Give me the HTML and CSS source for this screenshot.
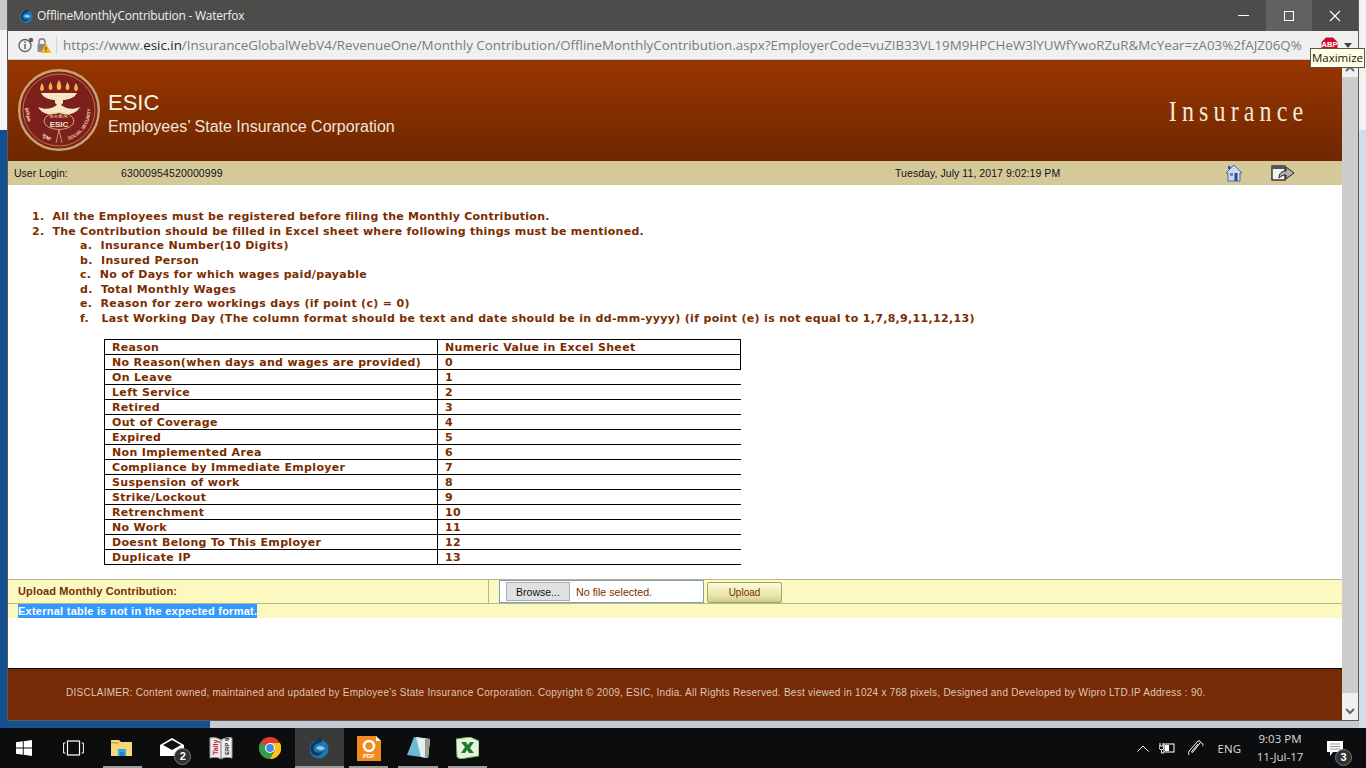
FILE: index.html
```html
<!DOCTYPE html>
<html lang="en">
<head>
    <meta charset="UTF-8">
    <meta name="viewport" content="width=device-width, initial-scale=1.0">
    <title>OfflineMonthlyContribution</title>
    <link rel="stylesheet" href="styles.css">
</head>
<body>
<div class="desktop">
    <div class="window">
        <div class="titlebar">
            <svg class="fox" width="16" height="16" viewBox="0 0 16 16"><circle cx="8" cy="8.500" r="6.500" fill="#1e78b4"/><path d="M8 1 L11 3 L9 5 C6 5 4 7 5 10 C6 12 9 12 11 10 C10 13 7 14 5 13 C2 11 2 6 5 4Z" fill="#0f3f62"/><path d="M6 8 C8 6 10 7 12 8 C11 10 8 10 6 8Z" fill="#9fd4f0"/></svg>
            <span class="wintitle">OfflineMonthlyContribution - Waterfox</span>
            <div class="wincontrols">
                <div class="winbtn"><span class="min-icon"></span></div>
                <div class="winbtn hover"><span class="max-icon"></span></div>
                <div class="winbtn">
                    <svg width="12" height="12" viewBox="0 0 12 12"><path d="M1 1 L11 11 M11 1 L1 11" stroke="#fff" stroke-width="1.100"/></svg>
                </div>
            </div>
        </div>
        <div class="toolbar">
            <svg class="info" width="16" height="16" viewBox="0 0 16 16"><circle cx="7" cy="8.500" r="6" fill="none" stroke="#5f5f5f" stroke-width="1.300"/><rect x="6.300" y="7" width="1.500" height="5" fill="#5f5f5f"/><rect x="6.300" y="4.500" width="1.500" height="1.500" fill="#5f5f5f"/><circle cx="13" cy="3" r="2.200" fill="#5f5f5f"/></svg>
            <svg class="lock" width="16" height="17" viewBox="0 0 16 17"><path d="M3 7 V4.500 C3 1 9 1 9 4.500 V7" fill="none" stroke="#8a8a8a" stroke-width="1.600"/><rect x="1.500" y="7" width="9" height="8" rx="1" fill="#8a8a8a"/><path d="M10 6.500 L15.500 16 H4.500Z" fill="#f6b81f"/><rect x="9.500" y="10" width="1" height="3" fill="#333"/><rect x="9.500" y="13.700" width="1" height="1" fill="#333"/></svg>
            <span class="urlsep"></span>
            <span class="url">https://www.<b>esic.in</b>/InsuranceGlobalWebV4/RevenueOne/Monthly Contribution/OfflineMonthlyContribution.aspx?EmployerCode=vuZIB33VL19M9HPCHeW3lYUWfYwoRZuR&amp;McYear=zA03%2fAJZ06Q%</span>
            <div class="addon">
                <svg width="17" height="17" viewBox="0 0 17 17"><path d="M5 0.500 H12 L16.500 5 V12 L12 16.500 H5 L0.500 12 V5Z" fill="#c8102e"/><text x="8.500" y="9.500" class="abp-text" text-anchor="middle">ABP</text></svg>
                <span class="dropcaret"></span>
            </div>
            <div class="tooltip">Maximize</div>
        </div>
        <div class="viewport">
            <div class="page">
                <div class="banner">
                    <svg class="logo" width="82" height="82" viewBox="0 0 82 82">
                        <defs>
                            <path id="arcl" d="M13.500 52 A30 30 0 0 1 16 24"/>
                            <path id="arcr" d="M50.500 71 A31.500 31.500 0 0 0 72 35"/>
                            <path id="arcb" d="M24 67 A31 31 0 0 0 37 72"/>
                        </defs>
                        <circle cx="41" cy="41" r="39.800" fill="#7d1f1c" stroke="#c6a471" stroke-width="2.400"/>
                        <circle cx="41" cy="41" r="36" fill="none" stroke="#d08a3c" stroke-width="0.800"/>
                        <g fill="#f4b54a">
                            <path d="M24 14 C21.500 18 21.500 22 24 22 C26.500 22 26.500 18 24 14Z"/>
                            <path d="M32.500 13 C30 17 30 21 32.500 21 C35 21 35 17 32.500 13Z"/>
                            <path d="M41 11 C38 16 38 21 41 21 C44 21 44 16 41 11Z"/>
                            <path d="M49.500 13 C47 17 47 21 49.500 21 C52 21 52 17 49.500 13Z"/>
                            <path d="M58 14 C55.500 18 55.500 22 58 22 C60.500 22 60.500 18 58 14Z"/>
                        </g>
                        <path d="M23 24 H59 C56 30 48 31 45 31 V34 L43 36 H39 L37 34 V31 C34 31 26 30 23 24Z" fill="#f6e7c0"/>
                        <path d="M20 38 C27 41 34 40 39 36 H43 C48 40 55 41 62 38 C58 45 50 47 41 44 C32 47 24 45 20 38Z" fill="#f6e7c0"/>
                        <ellipse cx="41" cy="52" rx="15" ry="8.500" fill="none" stroke="#e8c98a" stroke-width="0.800"/>
                        <text x="41" y="49" class="logo-hi" text-anchor="middle">क.रा.बी.नि.</text>
                        <text x="41" y="58" class="logo-esic" text-anchor="middle">ESIC</text>
                        <text class="logo-ring"><textPath href="#arcl">कर्मचारी</textPath></text>
                        <text class="logo-ring"><textPath href="#arcb">सुरक्षा</textPath></text>
                        <text class="logo-ring"><textPath href="#arcr">SOCIAL SECURITY</textPath></text>
                        <path d="M41 61 L38 74 M41 61 L44 74" stroke="#e8c98a" stroke-width="0.700"/>
                    </svg>
                    <div class="org">
                        <div class="org-short">ESIC</div>
                        <div class="org-long">Employees’ State Insurance Corporation</div>
                    </div>
                    <div class="module">Insurance</div>
                </div>
                <div class="navbar">
                    <span class="nav-label">User Login:</span>
                    <span class="nav-code">63000954520000999</span>
                    <span class="nav-date">Tuesday, July 11, 2017 9:02:19 PM</span>
                    <svg class="nav-home" width="18" height="18" viewBox="0 0 18 18"><path d="M9 1 L17 9 H15 V17 H3 V9 H1Z" fill="#cfd8e8" stroke="#4a68a8" stroke-width="1"/><rect x="9.500" y="9" width="3" height="8" fill="#1f4aa8"/><rect x="5" y="9" width="3" height="3" fill="#6d87b8"/><rect x="3" y="2" width="2.500" height="3" fill="#2d4fb0"/></svg>
                    <svg class="nav-exit" width="24" height="18" viewBox="0 0 24 18"><rect x="1" y="2" width="13" height="14" fill="#f2f2f2" stroke="#222" stroke-width="1.300"/><rect x="1" y="2" width="13" height="3" fill="#555"/><path d="M8 14 C8 9 11 7 15 7 V3 L23 9 L15 15 V11 C12 11 10 12 8 14Z" fill="#b0b0b0" stroke="#222" stroke-width="1"/></svg>
                </div>
                <div class="notes">
                    <div class="note">1.&nbsp; All the Employees must be registered before filing the Monthly Contribution.</div>
                    <div class="note">2.&nbsp; The Contribution should be filled in Excel sheet where following things must be mentioned.</div>
                    <div class="subnote">a.&nbsp; Insurance Number(10 Digits)</div>
                    <div class="subnote">b.&nbsp; Insured Person</div>
                    <div class="subnote">c.&nbsp; No of Days for which wages paid/payable</div>
                    <div class="subnote">d.&nbsp; Total Monthly Wages</div>
                    <div class="subnote">e.&nbsp; Reason for zero workings days (if point (c) = 0)</div>
                    <div class="subnote">f.&nbsp;&nbsp; Last Working Day (The column format should be text and date should be in dd-mm-yyyy) (if point (e) is not equal to 1,7,8,9,11,12,13)</div>
                </div>
                <table class="reasons">
                    <tr><td class="col1">Reason</td><td>Numeric Value in Excel Sheet</td></tr>
                    <tr><td class="col1">No Reason(when days and wages are provided)</td><td>0</td></tr>
                    <tr><td class="col1">On Leave</td><td>1</td></tr>
                    <tr><td class="col1">Left Service</td><td>2</td></tr>
                    <tr><td class="col1">Retired</td><td>3</td></tr>
                    <tr><td class="col1">Out of Coverage</td><td>4</td></tr>
                    <tr><td class="col1">Expired</td><td>5</td></tr>
                    <tr><td class="col1">Non Implemented Area</td><td>6</td></tr>
                    <tr><td class="col1">Compliance by Immediate Employer</td><td>7</td></tr>
                    <tr><td class="col1">Suspension of work</td><td>8</td></tr>
                    <tr><td class="col1">Strike/Lockout</td><td>9</td></tr>
                    <tr><td class="col1">Retrenchment</td><td>10</td></tr>
                    <tr><td class="col1">No Work</td><td>11</td></tr>
                    <tr><td class="col1">Doesnt Belong To This Employer</td><td>12</td></tr>
                    <tr><td class="col1">Duplicate IP</td><td>13</td></tr>
                </table>
                <div class="upload">
                    <div class="upload-label">Upload Monthly Contribution:</div>
                    <div class="upload-field">
                        <div class="filebox">
                            <button class="browse">Browse...</button>
                            <span class="nofile">No file selected.</span>
                        </div>
                        <button class="upload-btn">Upload</button>
                    </div>
                </div>
                <div class="message"><span class="selected">External table is not in the expected format.</span></div>
                <div class="footer">DISCLAIMER: Content owned, maintained and updated by Employee's State Insurance Corporation. Copyright © 2009, ESIC, India. All Rights Reserved. Best viewed in 1024 x 768 pixels, Designed and Developed by Wipro LTD.IP Address : 90.</div>
            </div>
            <div class="scrollbar">
                <svg width="16" height="17" viewBox="0 0 16 17"><path d="M4 11 L8 7 L12 11" fill="none" stroke="#666" stroke-width="2"/></svg>
                <div class="track"><div class="thumb"></div></div>
                <svg width="16" height="17" viewBox="0 0 16 17"><path d="M4 6 L8 10 L12 6" fill="none" stroke="#666" stroke-width="2"/></svg>
            </div>
        </div>
    </div>
</div>
<div class="taskbar">
    <div class="task wide">
        <svg width="16" height="16" viewBox="0 0 16 16"><path d="M0 2.300 L6.800 1.300 V7.500 H0Z M7.700 1.200 L16 0 V7.500 H7.700Z M0 8.400 H6.800 V14.700 L0 13.700Z M7.700 8.400 H16 V16 L7.700 14.800Z" fill="#fff"/></svg>
    </div>
    <div class="task wide">
        <svg width="21" height="16" viewBox="0 0 21 16"><rect x="4.500" y="1" width="12" height="14" fill="none" stroke="#fff" stroke-width="1.200"/><path d="M2.500 3 H0.600 V13 H2.500 M18.500 3 H20.400 V13 H18.500" fill="none" stroke="#fff"/></svg>
    </div>
    <div class="task running">
        <svg width="22" height="18" viewBox="0 0 22 18"><path d="M0 1 H8 L10 3 H21 V17 H0Z" fill="#f5d77c"/><rect x="0" y="3" width="8" height="1.500" fill="#c9a84a"/><path d="M7 10 H15 V17 H13 V13 H9 V17 H7Z" fill="#38a6de"/><rect x="9" y="13" width="4" height="4" fill="#2b7fb5"/></svg>
    </div>
    <div class="task">
        <svg width="24" height="20" viewBox="0 0 24 20"><path d="M0 7 L12 0 L24 7 V18 H0Z" fill="#fff"/><path d="M3 7 L12 2 L21 7 L12 12Z" fill="#111"/></svg>
        <span class="badge">2</span>
    </div>
    <div class="task">
        <svg width="24" height="24" viewBox="0 0 24 24"><path d="M1 2 C5 1 9 2 12 4 C15 2 19 1 23 2 V22 C19 21 15 21 12 23 C9 21 5 21 1 22Z" fill="#eee" stroke="#999"/><path d="M12 4 V23" stroke="#777"/><text x="0" y="0" class="book-red" transform="translate(8.500 19) rotate(-90)">Tally</text><text x="0" y="0" class="book-black" transform="translate(19.500 19) rotate(-90)">ERP 9</text></svg>
    </div>
    <div class="task">
        <svg width="22" height="22" viewBox="0 0 22 22"><circle cx="11" cy="11" r="11" fill="#e33b2e"/><path d="M11 11 L1.500 5.500 A11 11 0 0 0 11 22 L16.500 11Z" fill="#2f9e44"/><path d="M11 6 H21 A11 11 0 0 1 11 22 L16 13Z" fill="#f9c513"/><circle cx="11" cy="11" r="5" fill="#fff"/><circle cx="11" cy="11" r="3.900" fill="#4285f4"/></svg>
    </div>
    <div class="task active">
        <svg width="20" height="22" viewBox="0 0 20 22"><circle cx="10" cy="12" r="9.500" fill="#1e78b4"/><path d="M10 0 L14 3 L11 6 C7 6 4 9 5 13 C6 16 10 17 14 14 C12 18 8 20 5 18 C0 15 0 8 5 5Z" fill="#0e3a5c"/><path d="M7 11 C10 8 13 9 16 11 C14 14 10 14 7 11Z" fill="#8fcdec"/></svg>
    </div>
    <div class="task running">
        <svg width="24" height="25" viewBox="0 0 24 25"><path d="M0 0 H19 L24 5 V25 H0Z" fill="#f28a1e"/><path d="M19 0 L24 5 H19Z" fill="#fff"/><circle cx="12" cy="10" r="5" fill="none" stroke="#fff" stroke-width="2.500"/><text x="12" y="22" class="pdf-text" text-anchor="middle">PDF</text></svg>
    </div>
    <div class="task running">
        <svg width="23" height="22" viewBox="0 0 23 22"><path d="M7 0 L23 2 L21 21 L0 18Z" fill="#6fb9d4"/><path d="M9 0 L23 2 L21 21 L14 20Z" fill="#dff0f4"/><path d="M18 2 L23 2 L21 21 L18 20Z" fill="#9b9b8c"/></svg>
    </div>
    <div class="task running">
        <svg width="23" height="22" viewBox="0 0 23 22"><path d="M0 2 L14 0 L23 4 V19 L4 22 L1 20Z" fill="#e6f2dc" stroke="#6fa65a"/><path d="M5 5 L10 5 L12 8 L14 5 L18 5 L14 11 L18 16 H13 L11 13 L9 16 H5 L9 10Z" fill="#1f7a2e"/></svg>
    </div>
    <div class="tray">
        <svg width="12" height="7" viewBox="0 0 12 7"><path d="M0.500 6.500 L6 1 L11.500 6.500" fill="none" stroke="#fff"/></svg>
        <svg class="tray-power" width="16" height="12" viewBox="0 0 16 12"><rect x="5" y="2" width="10" height="8" fill="none" stroke="#fff"/><rect x="6" y="3" width="4" height="6" fill="#fff"/><path d="M1 4 V1 M4 4 V1 M0 4 H5 V6 L3 8 H2 L0 6Z M2.500 8 V11 H5" fill="none" stroke="#fff"/></svg>
        <svg class="tray-pen" width="16" height="16" viewBox="0 0 16 16"><path d="M1 15 C0 13 1 11 2 10 L10 1 C12 0 13 2 12 3 L5 12 C4 13 3 12 4 11 L10 4 M13 3 C15 3 16 5 14 6" fill="none" stroke="#fff"/></svg>
        <span class="tray-lang">ENG</span>
        <div class="clock"><div>9:03 PM</div><div>11-Jul-17</div></div>
        <div class="notify">
            <svg width="17" height="17" viewBox="0 0 17 17"><path d="M0 1 H16 V12 H6 L3 16 V12 H0Z" fill="#fff"/><path d="M3 4 H13 M3 6.500 H13 M3 9 H13" stroke="#999"/></svg>
            <span class="badge notify-badge">3</span>
        </div>
    </div>
</div>
</body>
</html>
```

FILE: styles.css
```css
*{
    box-sizing: border-box;
}
html, body{
    margin: 0;
    height: 100%;
    overflow: hidden;
}
body{
    width: 1366px;
    height: 768px;
    font-family: "Liberation Sans", sans-serif;
}
.desktop{
    height: 728px;
    padding-left: 7px;
    background:
        linear-gradient(#c9c9c9 0 30px, #f4f4f4 30px 130px, #14508f 130px) left top / 7px 100% no-repeat,
        linear-gradient(#f2f2f2 0 130px, #d3dce8 130px) right top / 7px 100% no-repeat,
        linear-gradient(90deg, #17508f 210px, #c5c9d0 210px);
}
.window{
    width: 1352px;
    height: 721px;
    border: 1px solid #5a5a5a;
    border-top: none;
    display: flex;
    flex-direction: column;
    position: relative;
}

/* browser chrome */
.titlebar{
    height: 31px;
    background: #4d4c4a;
    display: flex;
    align-items: center;
    color: #fff;
    padding-left: 10px;
}
.fox{
    margin-right: 3px;
}
.wintitle{
    font-family: "Open Sans", sans-serif;
    font-size: 12px;
    color: #f0f0f0;
    letter-spacing: -0.23px;
}
.wincontrols{
    margin-left: auto;
    display: flex;
    height: 100%;
}
.winbtn{
    width: 46px;
    display: flex;
    align-items: center;
    justify-content: center;
}
.hover{
    background: #616160;
}
.min-icon{
    width: 11px;
    height: 1px;
    background: #fff;
}
.max-icon{
    width: 10px;
    height: 10px;
    border: 1px solid #fff;
}
.toolbar{
    height: 29px;
    background: #f0f0f0;
    border-bottom: 1px solid #cfcfcf;
    display: flex;
    align-items: center;
    padding-left: 10px;
    position: relative;
}
.lock{
    margin-left: 2px;
}
.urlsep{
    width: 1px;
    height: 18px;
    background: #d4d4d4;
    margin: 0 6px 0 4px;
}
.url{
    font-family: "Open Sans", sans-serif;
    font-size: 13.37px;
    color: #7b7b7b;
    white-space: nowrap;
    width: 1242px;
    overflow: hidden;
}
.url b{
    font-weight: normal;
    color: #222;
}
.addon{
    display: flex;
    align-items: center;
    margin-left: 16px;
    gap: 6px;
}
.abp-text{
    font-family: "Liberation Sans", sans-serif;
    font-size: 7.5px;
    font-weight: bold;
    fill: #fff;
}
.dropcaret{
    width: 0;
    height: 0;
    border-left: 4px solid transparent;
    border-right: 4px solid transparent;
    border-top: 5px solid #444;
}
.tooltip{
    position: absolute;
    right: -7px;
    top: 17px;
    width: 55px;
    height: 20px;
    background: #ffffe1;
    border: 1px solid #555;
    font-family: "Open Sans", sans-serif;
    font-size: 11.5px;
    line-height: 18px;
    text-align: center;
    color: #111;
    z-index: 2;
}
.viewport{
    flex: 1;
    display: flex;
    min-height: 0;
}
.page{
    width: 1334px;
    background: #fff;
    display: flex;
    flex-direction: column;
}
.scrollbar{
    width: 16px;
    background: #f0f0f0;
    display: flex;
    flex-direction: column;
}
.track{
    flex: 1;
}
.thumb{
    height: 616px;
    background: #cdcdcd;
}

/* esic page */
.banner{
    height: 101px;
    background: linear-gradient(#993600, #6e2700);
    display: flex;
    align-items: center;
    padding-left: 10px;
    color: #fff;
    flex-shrink: 0;
}
.logo{
    margin-bottom: 2px;
}
.logo-hi{
    font-family: "Noto Sans", "DejaVu Sans", sans-serif;
    font-size: 4.5px;
    fill: #f5e6c8;
}
.logo-esic{
    font-family: "Liberation Sans", sans-serif;
    font-size: 8px;
    font-weight: bold;
    fill: #f5e6c8;
}
.logo-ring{
    font-family: "Liberation Sans", sans-serif;
    font-size: 4.5px;
    font-weight: bold;
    fill: #ecd9b4;
}
.org{
    margin-left: 8px;
    padding-top: 6px;
}
.org-short{
    font-size: 22px;
    line-height: 26px;
    color: #f8f2ea;
}
.org-long{
    font-size: 16px;
    line-height: 22px;
    color: #f0e4da;
}
.module{
    margin-left: auto;
    margin-right: 34px;
    margin-top: 1px;
    font-family: "Liberation Serif", serif;
    font-size: 30px;
    letter-spacing: 6.4px;
    color: #f3e8da;
    transform: scaleX(0.8);
    transform-origin: right center;
}
.navbar{
    height: 24px;
    background: #d6c999;
    display: flex;
    align-items: center;
    padding-left: 6px;
    font-size: 10.5px;
    color: #111;
    flex-shrink: 0;
    position: relative;
}
.nav-label{
    width: 107px;
}
.nav-code{
    width: 774px;
    letter-spacing: 0.15px;
}
.nav-date{
    width: 330px;
    letter-spacing: 0.06px;
}
.nav-exit{
    margin-left: 28px;
}
.notes{
    padding: 24px 0 0 24px;
    font-family: "DejaVu Sans", Verdana, sans-serif;
    font-size: 11px;
    font-weight: bold;
    color: #7a2d00;
}
.note{
    line-height: 15px;
    letter-spacing: 0.25px;
}
.subnote{
    line-height: 14.5px;
    padding-left: 48px;
    letter-spacing: 0.32px;
}
.reasons{
    border-collapse: collapse;
    margin: 13px 0 0 96px;
    width: 637px;
    table-layout: fixed;
    font-family: "DejaVu Sans", Verdana, sans-serif;
    font-size: 11px;
    font-weight: bold;
    color: #7a2d00;
    letter-spacing: 0.33px;
}
.reasons td{
    height: 15px;
    padding: 2px 0 0 7px;
    line-height: 12px;
    border-top: 1px solid #000;
    border-bottom: 1px solid #000;
    border-left: 1px solid #000;
    white-space: nowrap;
}
.reasons tr:nth-child(-n+2) td:last-child{
    border-right: 1px solid #000;
}
.col1{
    width: 333px;
}
.upload{
    margin-top: 14px;
    height: 25px;
    flex-shrink: 0;
    background: #fbf9c0;
    border-top: 1px solid #b8b68a;
    border-bottom: 1px solid #b8b68a;
    display: flex;
}
.upload-label{
    width: 481px;
    padding-left: 10px;
    font-size: 11px;
    font-weight: bold;
    color: #7a2d00;
    line-height: 22px;
    border-right: 1px solid #b8b68a;
    letter-spacing: 0.14px;
}
.upload-field{
    display: flex;
    align-items: flex-start;
    padding: 0 0 0 10px;
}
.filebox{
    width: 205px;
    height: 23px;
    background: #fff;
    border: 1px solid #7f9db9;
    display: flex;
    align-items: center;
    padding-left: 6px;
}
.browse{
    width: 64px;
    height: 19px;
    padding: 0;
    background: #e1e1e1;
    border: 1px solid #adadad;
    font-family: "Liberation Sans", sans-serif;
    font-size: 10.5px;
    color: #111;
}
.nofile{
    margin-left: 6px;
    font-size: 10.7px;
    color: #7a2d00;
}
.upload-btn{
    width: 75px;
    height: 21px;
    margin: 2px 0 0 3px;
    padding: 0;
    border: 1px solid #a5a26a;
    border-radius: 2px;
    background: linear-gradient(#fdfbd8, #e6e3a8 70%, #cfcc90);
    font-family: "Liberation Sans", sans-serif;
    font-size: 10px;
    color: #7a2d00;
}
.message{
    height: 14px;
    flex-shrink: 0;
    background: #fbf9c0;
    padding-left: 10px;
    font-size: 11px;
    font-weight: bold;
    line-height: 14px;
    letter-spacing: 0.25px;
}
.selected{
    background: #3399ff;
    color: #fff;
    display: inline-block;
}
.footer{
    margin-top: auto;
    height: 52px;
    flex-shrink: 0;
    border-top: 1px solid #000;
    background: #762a05;
    color: #dcc8b4;
    font-size: 10px;
    line-height: 47px;
    padding-left: 58px;
    letter-spacing: 0.26px;
    white-space: nowrap;
}

/* taskbar */
.taskbar{
    height: 40px;
    background: #0b0d0e;
    display: flex;
    align-items: center;
    color: #fff;
}
.task{
    width: 49.3px;
    height: 40px;
    display: flex;
    align-items: center;
    justify-content: center;
    position: relative;
    flex-shrink: 0;
}
.wide{
    width: 48.800px;
}
.running::after, .active::after{
    content: "";
    position: absolute;
    left: 5px;
    right: 5px;
    bottom: 0;
    height: 2px;
    background: #9c9c9c;
}
.active{
    background: #3a3a3a;
}
.active::after{
    left: 0;
    right: 0;
}
.badge{
    position: absolute;
    right: 5px;
    bottom: 3px;
    width: 17px;
    height: 17px;
    border-radius: 50%;
    background: #333;
    border: 1px solid #777;
    font-size: 11px;
    font-weight: bold;
    line-height: 15px;
    text-align: center;
    color: #fff;
}
.book-red{
    font-family: "Liberation Sans", sans-serif;
    font-size: 7px;
    font-weight: bold;
    fill: #d8203a;
}
.book-black{
    font-family: "Liberation Sans", sans-serif;
    font-size: 6px;
    font-weight: bold;
    fill: #222;
}
.pdf-text{
    font-family: "Liberation Sans", sans-serif;
    font-size: 6px;
    font-weight: bold;
    fill: #fff;
}
.tray{
    margin-left: auto;
    display: flex;
    align-items: center;
    height: 100%;
    padding-right: 15px;
}
.tray-power{
    margin-left: 10px;
}
.tray-pen{
    margin-left: 13px;
}
.tray-lang{
    margin-left: 14px;
    font-family: "Open Sans", sans-serif;
    font-size: 11.5px;
    color: #ddd;
}
.clock{
    margin-left: 8px;
    width: 62px;
    font-family: "Open Sans", sans-serif;
    font-size: 11.5px;
    line-height: 18px;
    text-align: center;
    color: #ddd;
}
.notify{
    margin-left: 16px;
    position: relative;
    display: flex;
    width: 24px;
}
.notify-badge{
    right: -1px;
    bottom: -9px;
}
```
